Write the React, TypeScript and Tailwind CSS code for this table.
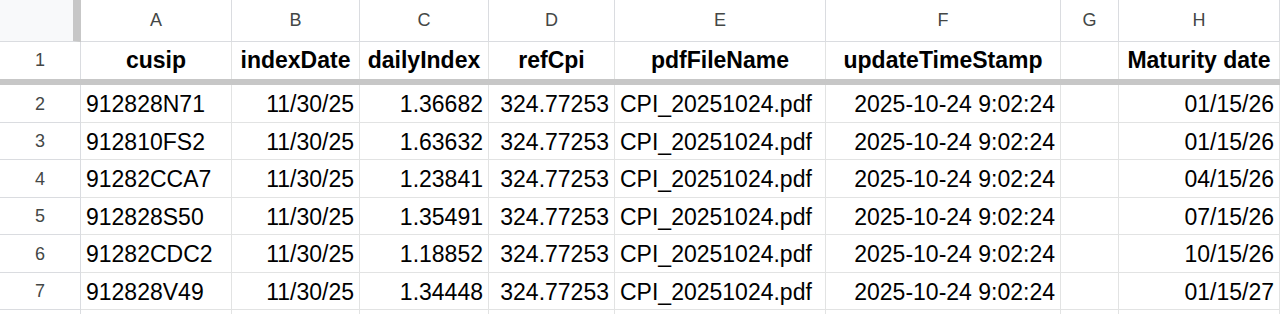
import React from 'react';

const cols = ['A', 'B', 'C', 'D', 'E', 'F', 'G', 'H'];
const headers = ['cusip', 'indexDate', 'dailyIndex', 'refCpi', 'pdfFileName', 'updateTimeStamp', '', 'Maturity date'];
const align = ['left', 'right', 'right', 'right', 'left', 'right', 'left', 'right'];

const rows: string[][] = [
    ['912828N71', '11/30/25', '1.36682', '324.77253', 'CPI_20251024.pdf', '2025-10-24 9:02:24', '', '01/15/26'],
    ['912810FS2', '11/30/25', '1.63632', '324.77253', 'CPI_20251024.pdf', '2025-10-24 9:02:24', '', '01/15/26'],
    ['91282CCA7', '11/30/25', '1.23841', '324.77253', 'CPI_20251024.pdf', '2025-10-24 9:02:24', '', '04/15/26'],
    ['912828S50', '11/30/25', '1.35491', '324.77253', 'CPI_20251024.pdf', '2025-10-24 9:02:24', '', '07/15/26'],
    ['91282CDC2', '11/30/25', '1.18852', '324.77253', 'CPI_20251024.pdf', '2025-10-24 9:02:24', '', '10/15/26'],
    ['912828V49', '11/30/25', '1.34448', '324.77253', 'CPI_20251024.pdf', '2025-10-24 9:02:24', '', '01/15/27'],
];

const grid = 'grid grid-cols-[81px_151px_128px_129px_126px_211px_235px_58px_161px]';

const App: React.FC = () => {
    return (
        <div className="w-[1280px] h-[314px] overflow-hidden bg-white font-[family-name:'Liberation_Sans',Arial,sans-serif] text-black">
            {/* column letters */}
            <div className={`${grid} h-[42px]`}>
                <div className="bg-[#f8f9fa] border-r-[8px] border-b border-r-[#c7c7c7] border-b-[#dadce0]" />
                {cols.map((c) => (
                    <div
                        key={c}
                        className="flex items-center justify-center border-r border-b border-[#dadce0] text-[18px] text-[#444746]"
                    >
                        {c}
                    </div>
                ))}
            </div>

            {/* frozen header row */}
            <div className={`${grid} h-[37px]`}>
                <div className="flex items-center justify-center border-r border-[#dadce0] text-[18px] text-[#444746]">1</div>
                {headers.map((h, i) => (
                    <div
                        key={i}
                        className="flex items-center justify-center border-r border-[#e2e3e3] text-[23px] font-bold whitespace-nowrap overflow-visible"
                    >
                        {h}
                    </div>
                ))}
            </div>
            <div className="h-[6px] bg-[#c7c7c7]" />

            {rows.map((r, ri) => (
                <div key={ri} className={`${grid} h-[37.5px]`}>
                    <div className="flex items-center justify-center pt-[2px] border-r border-b border-[#dadce0] text-[18px] text-[#444746]">
                        {ri + 2}
                    </div>
                    {r.map((v, ci) => (
                        <div
                            key={ci}
                            className={`flex items-center pt-[2px] px-[5px] border-r border-b border-[#e2e3e3] text-[23px] whitespace-nowrap ${
                                align[ci] === 'right' ? 'justify-end' : 'justify-start'
                            }`}
                        >
                            {v}
                        </div>
                    ))}
                </div>
            ))}

            {/* next row, cut off */}
            <div className={`${grid} h-[37.5px]`}>
                <div className="border-r border-[#dadce0]" />
                {cols.map((c) => (
                    <div key={c} className="border-r border-[#e2e3e3]" />
                ))}
            </div>
        </div>
    );
};

export default App;
